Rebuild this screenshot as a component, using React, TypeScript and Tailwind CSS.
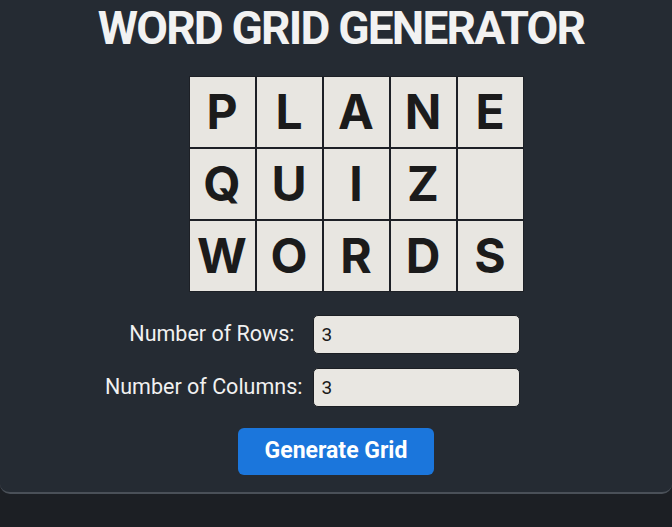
import React from "react";

const rows = [
  ["P", "L", "A", "N", "E"],
  ["Q", "U", "I", "Z", ""],
  ["W", "O", "R", "D", "S"],
];

const Field = ({ label, gap }: { label: string; gap: string }) => (
  <div className="flex items-center">
    <div className={`w-[214px] text-right text-[21.5px] text-[#f1f1f1] ${gap}`}>
      {label}
    </div>
    <input
      readOnly
      value="3"
      className="w-[207px] h-[39px] rounded-[5px] bg-[#e9e7e2] border border-[#1c1f24] px-2 text-[19px] text-[#1a1a1a] outline-none"
    />
  </div>
);

export default function App() {
  return (
    <div
      className="min-h-[527px] bg-[#1c1f24]"
      style={{ fontFamily: "Roboto, 'Liberation Sans', sans-serif" }}
    >
      <div className="h-[494px] bg-[#252b33] rounded-b-[10px] border-b-2 border-[#4a5058] flex flex-col items-center">
        <h1 className="mt-[1px] ml-[10px] text-[46px] leading-[54px] font-bold text-[#f2f2f2] tracking-[-1.8px]">
          WORD GRID GENERATOR
        </h1>
        <div className="mt-[21px] ml-[40px] grid grid-cols-5 gap-[2px] bg-[#1d2026] p-[1px]">
          {rows.flat().map((ch, i) => (
            <div
              key={i}
              className="w-[65px] h-[70px] bg-[#e8e6e1] flex items-center justify-center text-[48px] font-bold text-[#1b1b1b]"
              style={{ fontFamily: "Inter, 'Liberation Sans', sans-serif" }}
            >
              {ch}
            </div>
          ))}
        </div>
        <div className="mt-[23px] flex flex-col gap-[14px] ml-[-54px]">
          <Field label="Number of Rows:" gap="pr-[18px]" />
          <Field label="Number of Columns:" gap="pr-[10px]" />
        </div>
        <button className="mt-[21px] w-[196px] h-[47px] rounded-[6px] bg-[#1b76dc] text-white text-[23px] font-bold">
          Generate Grid
        </button>
      </div>
    </div>
  );
}
